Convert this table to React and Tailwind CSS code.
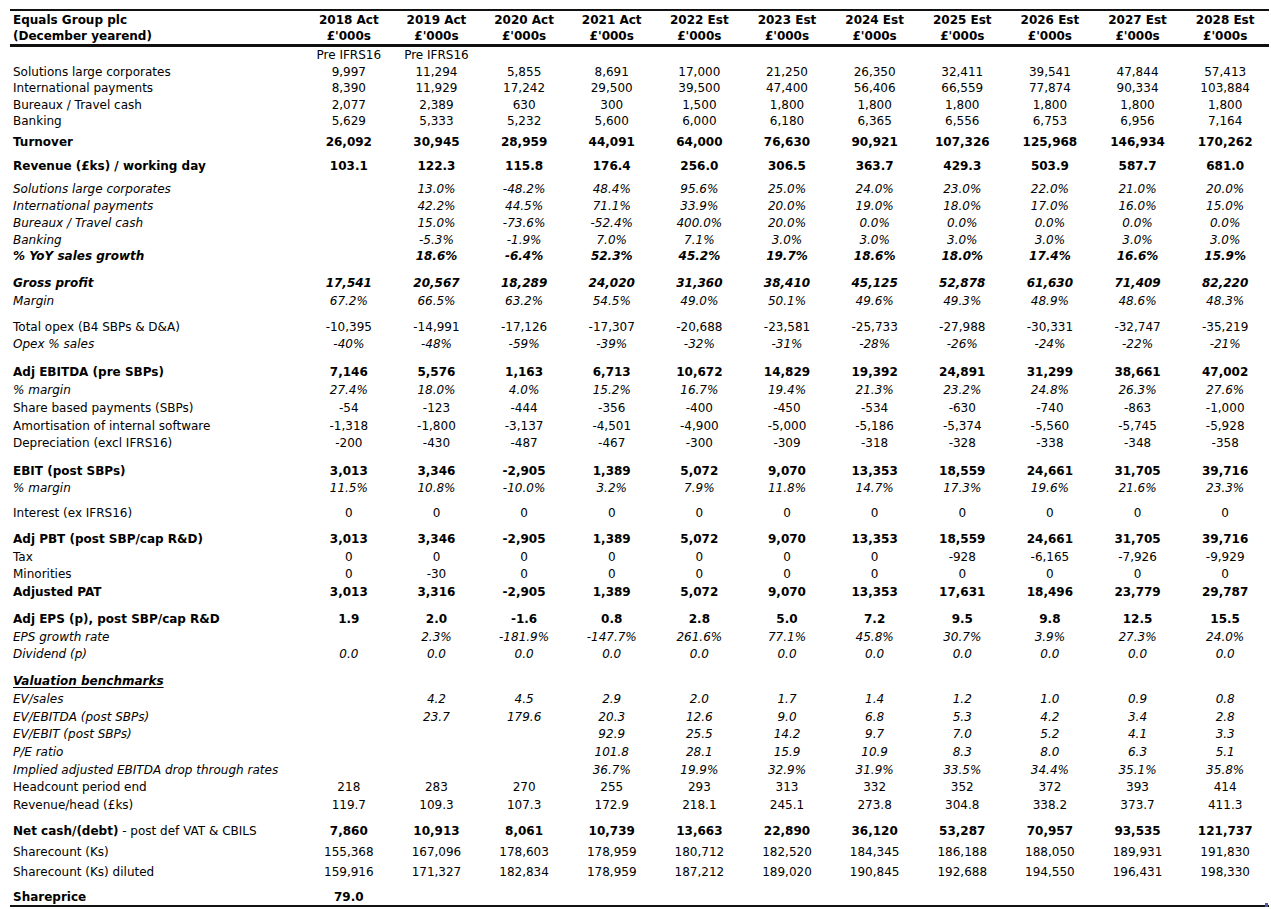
import React from "react";

const cols = ["2018 Act","2019 Act","2020 Act","2021 Act","2022 Est","2023 Est","2024 Est","2025 Est","2026 Est","2027 Est","2028 Est"];

const E = "";
const rows = [
  { l: "", s: "n", mt: "mt-0", v: ["Pre IFRS16", "Pre IFRS16"] },
  { l: "Solutions large corporates", s: "n", mt: "mt-px", v: ["9,997","11,294","5,855","8,691","17,000","21,250","26,350","32,411","39,541","47,844","57,413"] },
  { l: "International payments", s: "n", mt: "mt-0", v: ["8,390","11,929","17,242","29,500","39,500","47,400","56,406","66,559","77,874","90,334","103,884"] },
  { l: "Bureaux / Travel cash", s: "n", mt: "mt-px", v: ["2,077","2,389","630","300","1,500","1,800","1,800","1,800","1,800","1,800","1,800"] },
  { l: "Banking", s: "n", mt: "mt-0", v: ["5,629","5,333","5,232","5,600","6,000","6,180","6,365","6,556","6,753","6,956","7,164"] },
  { l: "Turnover", s: "b", mt: "mt-[5px]", v: ["26,092","30,945","28,959","44,091","64,000","76,630","90,921","107,326","125,968","146,934","170,262"] },
  { l: "Revenue (£ks) / working day", s: "b", mt: "mt-[8px]", v: ["103.1","122.3","115.8","176.4","256.0","306.5","363.7","429.3","503.9","587.7","681.0"] },
  { l: "Solutions large corporates", s: "i", mt: "mt-[7px]", v: [E,"13.0%","-48.2%","48.4%","95.6%","25.0%","24.0%","23.0%","22.0%","21.0%","20.0%"] },
  { l: "International payments", s: "i", mt: "mt-px", v: [E,"42.2%","44.5%","71.1%","33.9%","20.0%","19.0%","18.0%","17.0%","16.0%","15.0%"] },
  { l: "Bureaux / Travel cash", s: "i", mt: "mt-px", v: [E,"15.0%","-73.6%","-52.4%","400.0%","20.0%","0.0%","0.0%","0.0%","0.0%","0.0%"] },
  { l: "Banking", s: "i", mt: "mt-px", v: [E,"-5.3%","-1.9%","7.0%","7.1%","3.0%","3.0%","3.0%","3.0%","3.0%","3.0%"] },
  { l: "% YoY sales growth", s: "bi", mt: "mt-0", v: [E,"18.6%","-6.4%","52.3%","45.2%","19.7%","18.6%","18.0%","17.4%","16.6%","15.9%"] },
  { l: "Gross profit", s: "bi", mt: "mt-[11px]", v: ["17,541","20,567","18,289","24,020","31,360","38,410","45,125","52,878","61,630","71,409","82,220"] },
  { l: "Margin", s: "i", mt: "mt-0.5", v: ["67.2%","66.5%","63.2%","54.5%","49.0%","50.1%","49.6%","49.3%","48.9%","48.6%","48.3%"] },
  { l: "Total opex (B4 SBPs & D&A)", s: "n", mt: "mt-[10px]", v: ["-10,395","-14,991","-17,126","-17,307","-20,688","-23,581","-25,733","-27,988","-30,331","-32,747","-35,219"] },
  { l: "Opex % sales", s: "i", mt: "mt-px", v: ["-40%","-48%","-59%","-39%","-32%","-31%","-28%","-26%","-24%","-22%","-21%"] },
  { l: "Adj EBITDA (pre SBPs)", s: "b", mt: "mt-[12px]", v: ["7,146","5,576","1,163","6,713","10,672","14,829","19,392","24,891","31,299","38,661","47,002"] },
  { l: "% margin", s: "i", mt: "mt-0.5", v: ["27.4%","18.0%","4.0%","15.2%","16.7%","19.4%","21.3%","23.2%","24.8%","26.3%","27.6%"] },
  { l: "Share based payments (SBPs)", s: "n", mt: "mt-0.5", v: ["-54","-123","-444","-356","-400","-450","-534","-630","-740","-863","-1,000"] },
  { l: "Amortisation of internal software", s: "n", mt: "mt-0.5", v: ["-1,318","-1,800","-3,137","-4,501","-4,900","-5,000","-5,186","-5,374","-5,560","-5,745","-5,928"] },
  { l: "Depreciation (excl IFRS16)", s: "n", mt: "mt-px", v: ["-200","-430","-487","-467","-300","-309","-318","-328","-338","-348","-358"] },
  { l: "EBIT (post SBPs)", s: "b", mt: "mt-[12px]", v: ["3,013","3,346","-2,905","1,389","5,072","9,070","13,353","18,559","24,661","31,705","39,716"] },
  { l: "% margin", s: "i", mt: "mt-px", v: ["11.5%","10.8%","-10.0%","3.2%","7.9%","11.8%","14.7%","17.3%","19.6%","21.6%","23.3%"] },
  { l: "Interest (ex IFRS16)", s: "n", mt: "mt-[9px]", v: ["0","0","0","0","0","0","0","0","0","0","0"] },
  { l: "Adj PBT (post SBP/cap R&D)", s: "b", mt: "mt-[10px]", v: ["3,013","3,346","-2,905","1,389","5,072","9,070","13,353","18,559","24,661","31,705","39,716"] },
  { l: "Tax", s: "n", mt: "mt-0.5", v: ["0","0","0","0","0","0","0","-928","-6,165","-7,926","-9,929"] },
  { l: "Minorities", s: "n", mt: "mt-px", v: ["0","-30","0","0","0","0","0","0","0","0","0"] },
  { l: "Adjusted PAT", s: "b", mt: "mt-0.5", v: ["3,013","3,316","-2,905","1,389","5,072","9,070","13,353","17,631","18,496","23,779","29,787"] },
  { l: "Adj EPS (p), post SBP/cap R&D", s: "b", mt: "mt-[11px]", v: ["1.9","2.0","-1.6","0.8","2.8","5.0","7.2","9.5","9.8","12.5","15.5"] },
  { l: "EPS growth rate", s: "i", mt: "mt-0.5", v: [E,"2.3%","-181.9%","-147.7%","261.6%","77.1%","45.8%","30.7%","3.9%","27.3%","24.0%"] },
  { l: "Dividend (p)", s: "i", mt: "mt-px", v: ["0.0","0.0","0.0","0.0","0.0","0.0","0.0","0.0","0.0","0.0","0.0"] },
  { l: "Valuation benchmarks", s: "biu", mt: "mt-[11px]", v: [] },
  { l: "EV/sales", s: "i", mt: "mt-0.5", v: [E,"4.2","4.5","2.9","2.0","1.7","1.4","1.2","1.0","0.9","0.8"] },
  { l: "EV/EBITDA (post SBPs)", s: "i", mt: "mt-0.5", v: [E,"23.7","179.6","20.3","12.6","9.0","6.8","5.3","4.2","3.4","2.8"] },
  { l: "EV/EBIT (post SBPs)", s: "i", mt: "mt-px", v: [E,E,E,"92.9","25.5","14.2","9.7","7.0","5.2","4.1","3.3"] },
  { l: "P/E ratio", s: "i", mt: "mt-0.5", v: [E,E,E,"101.8","28.1","15.9","10.9","8.3","8.0","6.3","5.1"] },
  { l: "Implied adjusted EBITDA drop through rates", s: "i", mt: "mt-0.5", v: [E,E,E,"36.7%","19.9%","32.9%","31.9%","33.5%","34.4%","35.1%","35.8%"] },
  { l: "Headcount period end", s: "n", mt: "mt-px", v: ["218","283","270","255","293","313","332","352","372","393","414"] },
  { l: "Revenue/head (£ks)", s: "n", mt: "mt-0.5", v: ["119.7","109.3","107.3","172.9","218.1","245.1","273.8","304.8","338.2","373.7","411.3"] },
  { l: "NETCASH", s: "b", mt: "mt-[10px]", v: ["7,860","10,913","8,061","10,739","13,663","22,890","36,120","53,287","70,957","93,535","121,737"] },
  { l: "Sharecount (Ks)", s: "n", mt: "mt-[5px]", v: ["155,368","167,096","178,603","178,959","180,712","182,520","184,345","186,188","188,050","189,931","191,830"] },
  { l: "Sharecount (Ks) diluted", s: "n", mt: "mt-1", v: ["159,916","171,327","182,834","178,959","187,212","189,020","190,845","192,688","194,550","196,431","198,330"] },
  { l: "Shareprice", s: "b", mt: "mt-[9px]", v: ["79.0"] },
];

const styleCls = {
  n: "",
  b: "font-bold",
  i: "italic",
  bi: "font-bold italic",
  biu: "font-bold italic underline underline-offset-2",
};

function Row({ r }) {
  const st = styleCls[r.s];
  const vals = Array.from({ length: 11 }, (_, i) => r.v[i] || "");
  return (
    <div className={`grid grid-cols-[295px_repeat(11,minmax(0,1fr))] h-4 leading-4 ${r.mt}`}>
      <div className={`pl-[3px] whitespace-nowrap ${r.l === "NETCASH" ? "" : st}`}>
        {r.l === "NETCASH" ? (
          <>
            <span className="font-bold">Net cash/(debt)</span>
            <span> - post def VAT &amp; CBILS</span>
          </>
        ) : (
          r.l
        )}
      </div>
      {vals.map((v, i) => (
        <div key={i} className={`text-center whitespace-nowrap ${r.s === "biu" ? "" : st}`}>
          {v}
        </div>
      ))}
    </div>
  );
}

export default function App() {
  return (
    <div className="w-[1271px] h-[909px] bg-white overflow-hidden">
      <div
        className="relative ml-[10px] mt-[9px] w-[1259px] text-[12px] text-black"
        style={{ fontFamily: '"DejaVu Sans", Verdana, sans-serif' }}
      >
        <div className="border-t-2 border-b-[3px] border-[#111]">
          <div className="grid grid-cols-[295px_repeat(11,minmax(0,1fr))] h-[18px] leading-[18px] font-bold">
            <div className="pl-[3px]">Equals Group plc</div>
            {cols.map((c) => (
              <div key={c} className="text-center whitespace-nowrap">{c}</div>
            ))}
          </div>
          <div className="grid grid-cols-[295px_repeat(11,minmax(0,1fr))] h-[15px] leading-[15px] font-bold">
            <div className="pl-[3px]">(December yearend)</div>
            {cols.map((c) => (
              <div key={c} className="text-center">£'000s</div>
            ))}
          </div>
        </div>
        <div className="border-b-2 border-[#111]">
          {rows.map((r, i) => (
            <Row key={i} r={r} />
          ))}
        </div>
        <div className="absolute right-[1px] bottom-[0px] w-[3px] h-[4px] bg-[#4a5aa8]" />
      </div>
    </div>
  );
}
